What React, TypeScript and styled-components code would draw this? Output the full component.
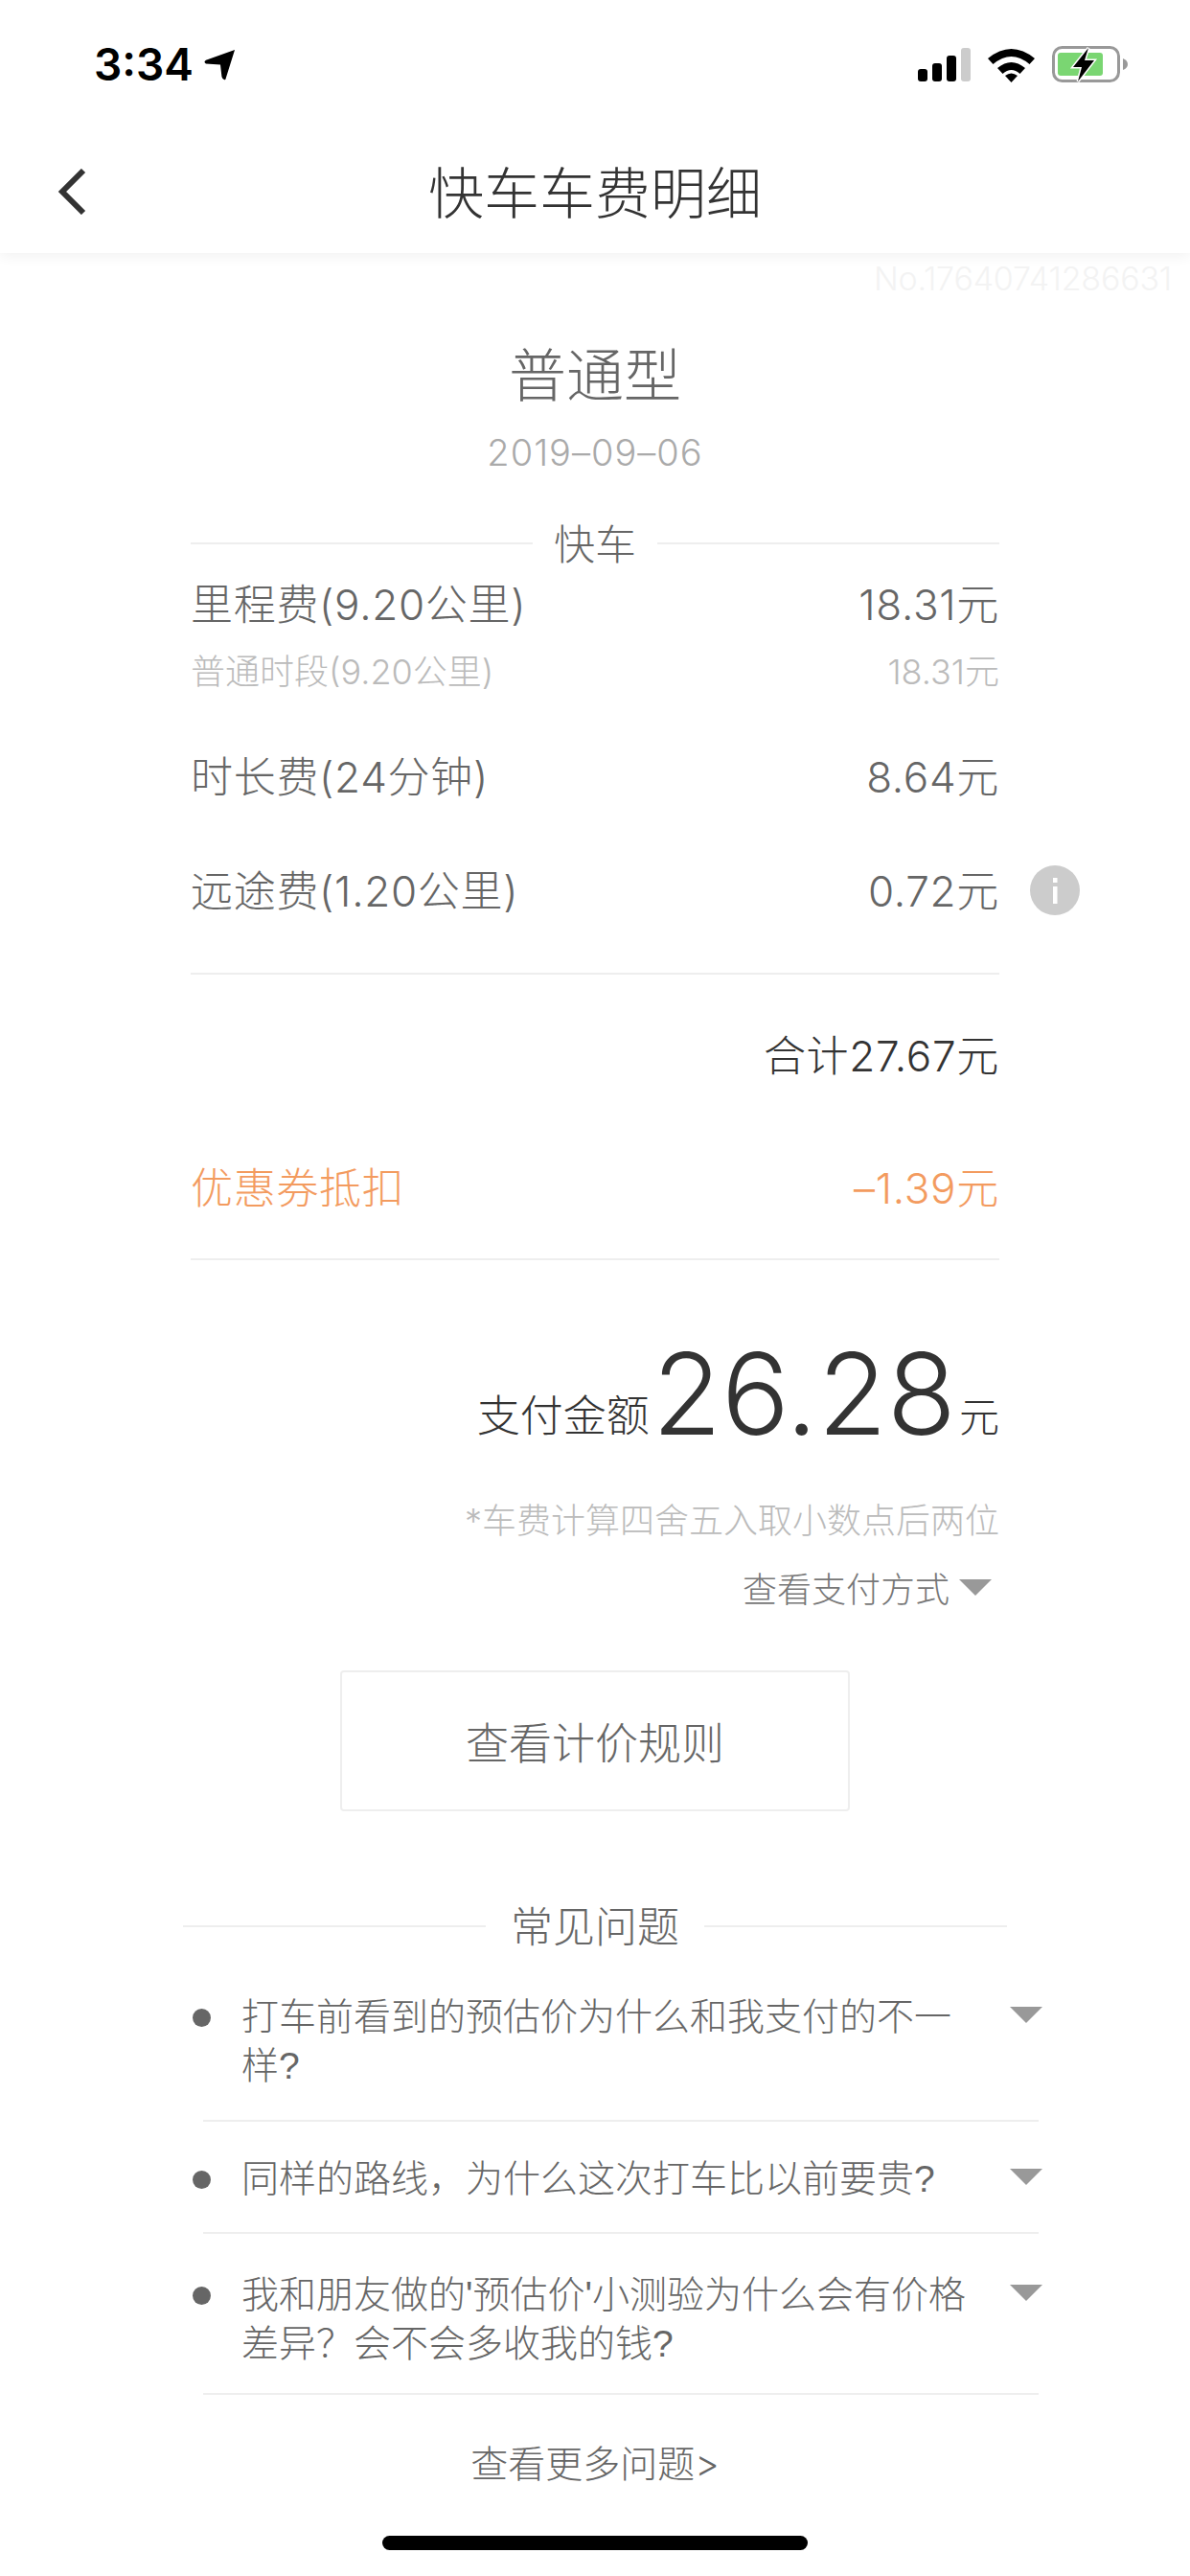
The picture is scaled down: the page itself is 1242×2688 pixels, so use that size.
import React from "react";
import styled, { createGlobalStyle } from "styled-components";

const Global = createGlobalStyle`
  html, body { margin: 0; padding: 0; background: #fff; }
  * { box-sizing: border-box; }
`;

const FONT = `Inter, "Noto Sans CJK SC", sans-serif`;

const Page = styled.div`
  width: 1242px;
  height: 2688px;
  overflow: hidden;
  background: #fff;
  font-family: ${FONT};
  font-weight: 300;
  display: flex;
  flex-direction: column;
`;
const Header = styled.header`
  height: 264px;
  background: #fff;
  box-shadow: 0 3px 14px rgba(0, 0, 0, 0.06);
  display: flex;
  flex-direction: column;
`;
const StatusBar = styled.div`
  height: 132px;
  padding: 48px 65px 0 98px;
  display: flex;
  justify-content: space-between;
  align-items: flex-start;
`;
const Clock = styled.div`
  display: flex;
  align-items: center;
  gap: 11px;
  font: 600 46px/38px Inter, sans-serif;
  color: #000;
`;
const StatusIcons = styled.div`
  display: flex;
  align-items: flex-start;
  gap: 18px;
`;
const NavBar = styled.div`
  height: 132px;
  position: relative;
  display: flex;
  align-items: center;
  justify-content: center;
`;
const BackIcon = styled.svg`
  position: absolute;
  left: 60px;
  top: 44px;
`;
const NavTitle = styled.div`
  font-size: 58px;
  color: #333;
`;
const OrderNo = styled.div`
  height: 54px;
  line-height: 54px;
  padding-right: 19px;
  text-align: right;
  font-size: 34px;
  letter-spacing: -0.2px;
  color: #f3f3f3;
`;
const Heading = styled.div`
  margin-top: 34px;
  height: 80px;
  line-height: 80px;
  text-align: center;
  font-size: 60px;
  color: #666;
`;
const DateText = styled.div`
  margin-top: 15px;
  height: 50px;
  line-height: 50px;
  text-align: center;
  font-size: 38px;
  letter-spacing: 1px;
  color: #aaa;
`;
const Column = styled.main`
  padding: 0 199px;
  display: flex;
  flex-direction: column;
`;
const Divider = styled.div<{ $top: number; $gap: number; $size: number; $bleed?: number }>`
  margin: ${(p) => p.$top}px ${(p) => -(p.$bleed ?? 0)}px 0;
  height: 60px;
  display: flex;
  align-items: center;
  gap: ${(p) => p.$gap}px;
  font-size: ${(p) => p.$size}px;
  color: #666;
  &::before,
  &::after {
    content: "";
    flex: 1;
    height: 2px;
    background: #eee;
  }
`;
const DividerLabel = styled.span`
  padding-bottom: 4px;
`;
const Row = styled.div<{ $top?: number; $tone?: string; $minor?: boolean }>`
  position: relative;
  margin-top: ${(p) => p.$top ?? 0}px;
  height: ${(p) => (p.$minor ? 50 : 66)}px;
  padding-bottom: 5px;
  display: flex;
  align-items: center;
  justify-content: space-between;
  font-size: ${(p) => (p.$minor ? 36 : 44)}px;
  letter-spacing: ${(p) => (p.$minor ? 0 : 0.7)}px;
  color: ${(p) => p.$tone ?? "#666"};
`;
const InfoBadge = styled.svg`
  position: absolute;
  right: -84px;
  top: 7px;
`;
const Rule = styled.hr<{ $top: number }>`
  margin: ${(p) => p.$top}px 0 0;
  border: 0;
  height: 2px;
  background: #eee;
`;
const PayLine = styled.div`
  margin-top: 74px;
  height: 130px;
  line-height: 130px;
  text-align: right;
  white-space: nowrap;
  color: #333;
`;
const PayLabel = styled.span`
  font-size: 45px;
  vertical-align: 3px;
`;
const PayAmount = styled.span`
  font-size: 118px;
  margin: 0 3px;
`;
const PayUnit = styled.span`
  font-size: 42px;
  vertical-align: 3px;
`;
const Note = styled.div`
  margin-top: 43px;
  height: 50px;
  line-height: 50px;
  text-align: right;
  font-size: 36px;
  color: #bbb;
`;
const PayWay = styled.div`
  margin-top: 19px;
  height: 50px;
  display: flex;
  justify-content: flex-end;
  align-items: center;
  gap: 10px;
  padding-right: 8px;
  font-size: 36px;
  color: #777;
`;
const Caret = styled.i`
  display: block;
  width: 0;
  height: 0;
  border-left: 17px solid transparent;
  border-right: 17px solid transparent;
  border-top: 17px solid #999;
`;
const RuleButton = styled.button`
  align-self: center;
  margin-top: 62px;
  width: 532px;
  height: 147px;
  background: #fff;
  border: 2px solid #eee;
  border-radius: 4px;
  font: inherit;
  font-size: 45px;
  color: #666;
`;
const Faq = styled.ul`
  list-style: none;
  margin: 0;
  padding: 0 0 0 13px;
`;
const FaqItem = styled.li<{ $h: number; $pad: number }>`
  height: ${(p) => p.$h}px;
  border-bottom: 2px solid #eee;
  display: flex;
  align-items: flex-start;
  padding-top: ${(p) => p.$pad}px;
  margin-right: -41px;
`;
const Dot = styled.span`
  flex: none;
  width: 19px;
  height: 19px;
  border-radius: 50%;
  background: #666;
  margin: 17px 32px 0 -11px;
`;
const FaqText = styled.div`
  flex: none;
  width: 770px;
  font-family: "Liberation Sans", "Noto Sans CJK SC", sans-serif;
  font-size: 39px;
  line-height: 51px;
  color: #666;
`;
const FaqCaret = styled(Caret)`
  flex: none;
  margin: 15px -4px 0 auto;
`;
const More = styled.div`
  margin-top: 47px;
  height: 50px;
  line-height: 50px;
  text-align: center;
  font-size: 39px;
  color: #666;
`;
const HomeBar = styled.div`
  align-self: center;
  margin-top: 50px;
  width: 444px;
  height: 15px;
  border-radius: 8px;
  background: #000;
`;

export default function App() {
  return (
    <Page>
      <Global />
      <Header>
        <StatusBar>
          <Clock>
            3:34
            <svg width="33" height="33" viewBox="0 0 34 34">
              <path d="M33 1 L23 33 Q20 34 19 30 L17.5 17 L2 16 Q-1 14 2 12 Z" fill="#000" />
            </svg>
          </Clock>
          <StatusIcons>
            <svg width="55" height="37" viewBox="0 0 55 37">
              <rect x="0" y="24" width="10" height="13" rx="3" fill="#000" />
              <rect x="15" y="18" width="10" height="19" rx="3" fill="#000" />
              <rect x="30" y="10" width="10" height="27" rx="3" fill="#000" />
              <rect x="45" y="2" width="10" height="35" rx="3" fill="#ccc" />
            </svg>
            <svg width="49" height="38" viewBox="0 0 49 38">
              <path d="M0 13 Q24.5 -7 49 13 L43.5 19 Q24.5 3 5.5 19 Z" fill="#000" />
              <path d="M10 23 Q24.5 11 39 23 L33.5 29 Q24.5 21 15.5 29 Z" fill="#000" />
              <path d="M18 31 Q24.5 26 31 31 L24.5 38 Z" fill="#000" />
            </svg>
            <svg width="79" height="38" viewBox="0 0 79 38">
              <rect x="1.5" y="1.5" width="68" height="35" rx="9" fill="#fff" stroke="#999" strokeWidth="3" />
              <rect x="6" y="7" width="47" height="24" rx="3" fill="#7ad672" />
              <path d="M74 13 Q79 15 79 19 Q79 23 74 25 Z" fill="#999" />
              <path d="M38 2 L22 22 L31 22 L27 37 L44 15 L34 15 L38 2 Z" fill="#000" stroke="#fff" strokeWidth="3" paintOrder="stroke" />
            </svg>
          </StatusIcons>
        </StatusBar>
        <NavBar>
          <BackIcon width="30" height="48" viewBox="0 0 30 48">
            <path d="M27 2 L5 24 L27 46" fill="none" stroke="#333" strokeWidth="6" />
          </BackIcon>
          <NavTitle>快车车费明细</NavTitle>
        </NavBar>
      </Header>
      <OrderNo>No.17640741286631</OrderNo>
      <Heading>普通型</Heading>
      <DateText>2019–09–06</DateText>
      <Column>
        <Divider $top={40} $gap={22} $size={43}>
          <DividerLabel>快车</DividerLabel>
        </Divider>
        <Row>
          <span>里程费(9.20公里)</span>
          <span>18.31元</span>
        </Row>
        <Row $top={12} $minor $tone="#bbb">
          <span>普通时段(9.20公里)</span>
          <span>18.31元</span>
        </Row>
        <Row $top={52}>
          <span>时长费(24分钟)</span>
          <span>8.64元</span>
        </Row>
        <Row $top={53}>
          <span>远途费(1.20公里)</span>
          <span>0.72元</span>
          <InfoBadge width="52" height="52" viewBox="0 0 52 52">
            <circle cx="26" cy="26" r="26" fill="#ccc" />
            <rect x="24" y="22" width="4.5" height="18" fill="#fff" />
            <rect x="24" y="13" width="4.5" height="5" fill="#fff" />
          </InfoBadge>
        </Row>
        <Rule $top={53} />
        <Row $top={51} $tone="#333">
          <span />
          <span>合计27.67元</span>
        </Row>
        <Row $top={72} $tone="#f39b5f">
          <span>优惠券抵扣</span>
          <span>–1.39元</span>
        </Row>
        <Rule $top={41} />
        <PayLine>
          <PayLabel>支付金额</PayLabel>
          <PayAmount>26.28</PayAmount>
          <PayUnit>元</PayUnit>
        </PayLine>
        <Note>*车费计算四舍五入取小数点后两位</Note>
        <PayWay>
          查看支付方式
          <Caret />
        </PayWay>
        <RuleButton>查看计价规则</RuleButton>
        <Divider $top={90} $gap={26} $size={44} $bleed={8}>
          <DividerLabel>常见问题</DividerLabel>
        </Divider>
        <Faq>
          <FaqItem $h={174} $pad={39}>
            <Dot />
            <FaqText>打车前看到的预估价为什么和我支付的不一样?</FaqText>
            <FaqCaret />
          </FaqItem>
          <FaqItem $h={117} $pad={34}>
            <Dot />
            <FaqText>同样的路线，为什么这次打车比以前要贵?</FaqText>
            <FaqCaret />
          </FaqItem>
          <FaqItem $h={168} $pad={38}>
            <Dot />
            <FaqText>我和朋友做的'预估价'小测验为什么会有价格差异？会不会多收我的钱?</FaqText>
            <FaqCaret />
          </FaqItem>
        </Faq>
        <More>查看更多问题&gt;</More>
        <HomeBar />
      </Column>
    </Page>
  );
}
